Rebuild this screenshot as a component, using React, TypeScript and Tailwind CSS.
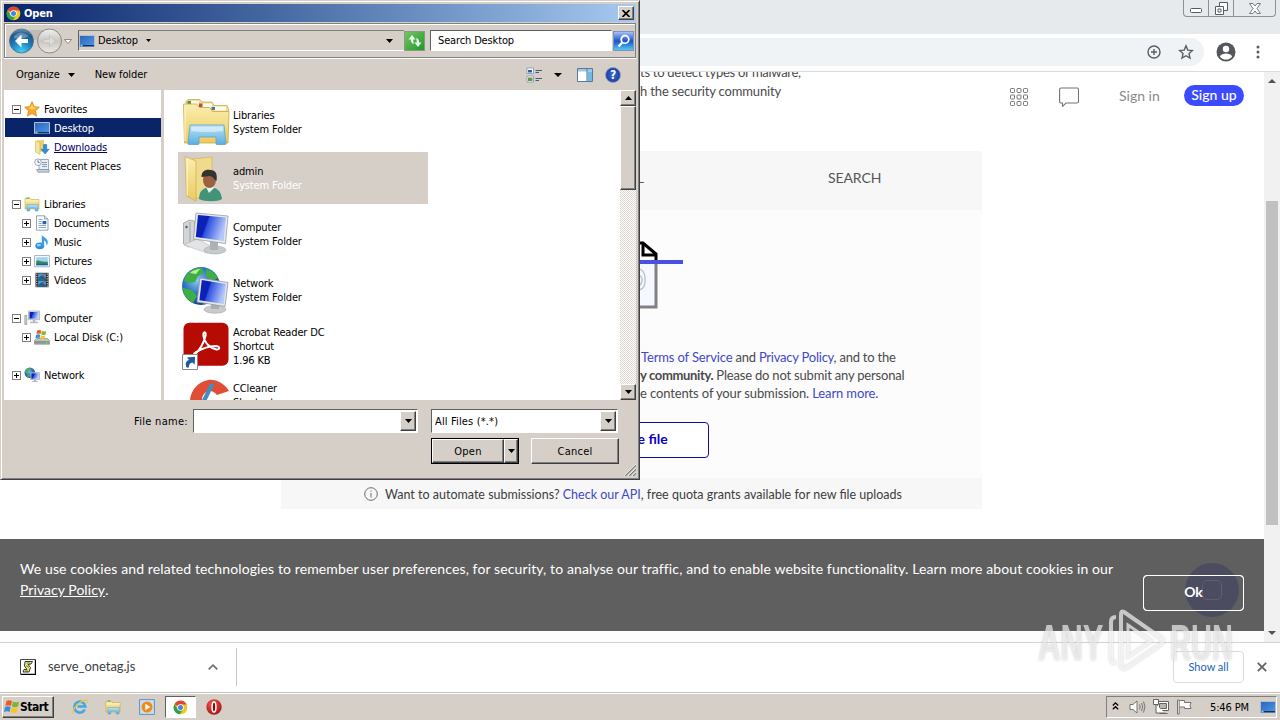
import React from 'react';

type IconProps = { className?: string };

const RAISED =
  'border border-t-white border-l-white border-r-[#404040] border-b-[#404040] shadow-[inset_-1px_-1px_0_#808080] bg-[#d5cfc8]';
const SUNKEN =
  'border border-t-[#606060] border-l-[#606060] border-r-white border-b-white';
const SYSTEM_FONT = "font-['DejaVu_Sans_Condensed','DejaVu_Sans',sans-serif] text-[11px] tracking-[-0.14px]";

/* shared gradients */

function Gradients() {
  return (
    <svg width="0" height="0" className="absolute">
      <defs>
        <linearGradient id="screen" x1="0" y1="0" x2="1" y2="0.3">
          <stop offset="0" stopColor="#0a24c0" />
          <stop offset="0.4" stopColor="#0c20b4" />
          <stop offset="0.45" stopColor="#2c50e0" />
          <stop offset="1" stopColor="#b6c8fa" />
        </linearGradient>
        <linearGradient id="desk" x1="0" y1="0" x2="1" y2="1">
          <stop offset="0" stopColor="#2b62b8" />
          <stop offset="1" stopColor="#4d9be8" />
        </linearGradient>
        <linearGradient id="folder" x1="0" y1="0" x2="0" y2="1">
          <stop offset="0" stopColor="#fbeeb0" />
          <stop offset="1" stopColor="#eccb5e" />
        </linearGradient>
        <linearGradient id="tray" x1="0" y1="0" x2="0" y2="1">
          <stop offset="0" stopColor="#bfe4f8" />
          <stop offset="1" stopColor="#58aede" />
        </linearGradient>
        <radialGradient id="globe" cx="0.4" cy="0.35" r="0.7">
          <stop offset="0" stopColor="#8cc8f0" />
          <stop offset="0.5" stopColor="#2f74c4" />
          <stop offset="1" stopColor="#123f88" />
        </radialGradient>
        <radialGradient id="back" cx="0.5" cy="0.95" r="0.95">
          <stop offset="0" stopColor="#43d3f6" />
          <stop offset="0.5" stopColor="#1c7cb8" />
          <stop offset="0.8" stopColor="#1d5688" />
          <stop offset="1" stopColor="#6f9cc0" />
        </radialGradient>
        <linearGradient id="forward" x1="0" y1="0" x2="0" y2="1">
          <stop offset="0" stopColor="#f0efed" />
          <stop offset="0.5" stopColor="#cac8c4" />
          <stop offset="1" stopColor="#e9e8e6" />
        </linearGradient>
        <radialGradient id="red" cx="0.4" cy="0.3" r="0.8">
          <stop offset="0" stopColor="#ee5a50" />
          <stop offset="1" stopColor="#a30d0d" />
        </radialGradient>
      </defs>
    </svg>
  );
}

/* small icons */

function ChromeIcon({ className = 'size-4' }: IconProps) {
  return (
    <svg viewBox="0 0 16 16" className={className}>
      <circle cx="8" cy="8" r="7.3" fill="#f5c518" />
      <path d="M8 8 1.6 4.4A7.3 7.3 0 0 1 14.5 4.7H8z" fill="#df4632" />
      <path d="M1.6 4.4A7.3 7.3 0 0 0 7.4 15.3L10.8 9.7 8 8 5 9.5z" fill="#2da14c" />
      <circle cx="8" cy="8" r="3.5" fill="#fff" />
      <circle cx="8" cy="8" r="2.7" fill="#4683ea" />
    </svg>
  );
}

function StarIcon() {
  return (
    <svg viewBox="0 0 16 16" className="size-4">
      <path d="M8 .7l2.2 4.9 5.2.6-3.9 3.6 1.1 5.3L8 12.4l-4.6 2.7 1.1-5.3L.6 6.2l5.2-.6z" fill="#f9a72b" stroke="#d97d18" strokeWidth=".7" />
      <path d="M8 2.6l1.5 3.6 3.6.5-5.1 2-3.8-2 2.4-.5z" fill="#fdd45c" />
    </svg>
  );
}

function DesktopIcon() {
  return (
    <svg viewBox="0 0 16 16" className="size-4">
      <path d="M.5 2.5h15v11H.5z" fill="url(#desk)" stroke="#aebfd0" strokeWidth="1" />
      <path d="M1 12h14v1.5H1z" fill="#14316e" />
      <path d="M1.5 11.8h2v1.6h-2z" fill="#8fe0e8" />
    </svg>
  );
}

function DownloadsIcon() {
  return (
    <svg viewBox="0 0 16 16" className="size-4">
      <path d="M3 1.5 10 .8v12H3z" fill="#ead071" />
      <path d="M1.5 1.8 6 3.4v11.8L1.5 13z" fill="#f6e49b" stroke="#c8a840" strokeWidth=".5" />
      <path d="M9.5 5.5h3.2v4.8h2.5L11.1 15 7 10.3h2.5z" fill="#2e8fe0" stroke="#1a66b4" strokeWidth=".5" />
    </svg>
  );
}

function RecentIcon() {
  return (
    <svg viewBox="0 0 16 16" className="size-4">
      <path d="M5 1.5h9.5v10H5z" fill="#e8eef4" stroke="#8a98a8" strokeWidth=".8" />
      <path d="M2.5 11.5H15v2.7H4z" fill="#c5d0da" stroke="#7d8b9a" strokeWidth=".7" />
      <path d="M8 4.5h5M8 6.5h5M8 8.5h5" stroke="#7c93ac" strokeWidth=".9" />
      <circle cx="4" cy="4.2" r="3.3" fill="#f4f8fb" stroke="#8695a5" strokeWidth=".8" />
      <path d="M4 2.2v2.2h1.6" stroke="#456" strokeWidth=".8" fill="none" />
    </svg>
  );
}

function LibraryIcon() {
  return (
    <svg viewBox="0 0 16 16" className="size-4">
      <path d="M1 2.2h5l1 1.3h8v9.5H1z" fill="url(#folder)" stroke="#c9a846" strokeWidth=".6" />
      <path d="M2.5 1.5h3v1.2h-3z" fill="#5cae5c" />
      <path d="M1 5h14" stroke="#fff6cc" strokeWidth=".8" />
      <path d="M3 8.5h11V15h-2.7v-3H5.7v3H3z" fill="url(#tray)" stroke="#4a9ccc" strokeWidth=".5" />
    </svg>
  );
}

function DocumentIcon() {
  return (
    <svg viewBox="0 0 16 16" className="size-4">
      <path d="M2.5.8h8L14 4v11.2H2.5z" fill="#fbfcfe" stroke="#7d8ea4" strokeWidth=".8" />
      <path d="M10.5.8V4H14" fill="#d5deea" stroke="#7d8ea4" strokeWidth=".7" />
      <path d="M4.5 4.5h4M4.5 6.5h3M4.5 8.5h3M4.5 10.5h7.5M4.5 12.5h7.5" stroke="#7f9fc8" strokeWidth=".9" />
      <path d="M8.5 6h3.8v3.2H8.5z" fill="#2f62a8" />
    </svg>
  );
}

function MusicIcon() {
  return (
    <svg viewBox="0 0 16 16" className="size-4">
      <ellipse cx="5.8" cy="11.8" rx="4.5" ry="3.4" fill="#2f8fd8" />
      <path d="M7.8 12V.5c.8 3 5.800 3.400 6 7.200 0 1.600-.4 2.800-1.400 3.900.4-3-.8-4.600-2.300-5.200V12z" fill="#3b9fe6" />
      <ellipse cx="4.8" cy="11.1" rx="2.2" ry="1.3" fill="#8fcdf6" />
    </svg>
  );
}

function PicturesIcon() {
  return (
    <svg viewBox="0 0 16 16" className="size-4">
      <path d="M.6 2.6h14.8v11.2H.6z" fill="#fff" stroke="#8d9bab" strokeWidth=".8" />
      <path d="M2.2 4.2h11.6v8H2.2z" fill="#9fd4f2" />
      <path d="M2.2 8c3-1.6 6 2 11.6.5v3.7H2.2z" fill="#3d8a5c" />
      <path d="M2.2 10.6h11.6v1.6H2.2z" fill="#1d5fa4" />
    </svg>
  );
}

function VideosIcon() {
  return (
    <svg viewBox="0 0 16 16" className="size-4">
      <path d="M1.5.8h13v14.4h-13z" fill="#26262c" />
      <path d="M4.2 1.5h7.6v6H4.2zM4.2 8.5h7.6v6H4.2z" fill="#4aa3d0" />
      <path d="M4.5 5.5 8 3l3.5 3v1.3h-7zM4.5 12.5 8 10l3.5 3v1.3h-7z" fill="#1f5f96" />
      <path d="M9 2h2v2H9zM9 9h2v2H9z" fill="#c85a50" />
      <path d="M2.8 1.5v14M13.2 1.5v14" stroke="#fff" strokeWidth="1" strokeDasharray="1.2 1.2" />
    </svg>
  );
}

function ComputerIcon() {
  return (
    <svg viewBox="0 0 16 16" className="size-4">
      <path d="M.8 5.5h2v9h-2z" fill="#cfd2d4" stroke="#7d8184" strokeWidth=".6" />
      <path d="M4.5 1h11v8.7h-11z" fill="#e2e4e6" stroke="#9298a0" strokeWidth=".6" />
      <path d="M5.5 2h9v6.7h-9z" fill="url(#screen)" />
      <path d="M8.8 9.8h2.6v2H14v1.4H6v-1.4h2.8z" fill="#b6babd" />
    </svg>
  );
}

function DiskIcon() {
  return (
    <svg viewBox="0 0 16 16" className="size-4">
      <path d="M2.5 9.5h11l2 2v3.7H.5v-3.7z" fill="#bfc4c3" stroke="#73797a" strokeWidth=".6" />
      <path d="M1 12h14v2.7H1z" fill="#8b9494" />
      <path d="M11.5 12.6h2.5v1.4h-2.5z" fill="#55e03a" />
      <path d="M3.2 1.6C4.8.6 6.2.8 7.3 1.5L6.5 5C5.300 4.300 4 4.200 2.400 5.100z" fill="#ee5a24" />
      <path d="M8 1.800c1.500.9 3 .9 4.400.1l-.8 3.500c-1.500.8-3 .7-4.400-.1z" fill="#7fba2c" />
      <path d="M2.200 6c1.500-.9 2.900-.8 4.100-.1l-.8 3.300c-1.300-.7-2.600-.6-4.100.1z" fill="#2f8de0" />
      <path d="M7 6.200c1.500.8 2.900.9 4.400.1l-.8 3.200c-1.400.8-2.900.8-4.400 0z" fill="#fbc41c" />
    </svg>
  );
}

function NetworkIcon() {
  return (
    <svg viewBox="0 0 16 16" className="size-4">
      <circle cx="5.8" cy="5.800" r="5.300" fill="url(#globe)" />
      <path d="M2 2.500c2-1.800 4-1.500 5-.8L5 4.500 3 5.500 1 5zM3.500 7l2.500 1-1 2.800-1.800-.6z" fill="#4cb34a" />
      <path d="M6.500 5.500h9v7h-9z" fill="#e0e3e6" stroke="#8b9199" strokeWidth=".5" />
      <path d="M7.300 6.300h7.400v5.400H7.300z" fill="url(#screen)" />
      <path d="M10 12.600h2v1.300h1.800V15H8.200v-1.100H10z" fill="#b3b8bb" />
    </svg>
  );
}

/* 48px icons */

function LibrariesLarge() {
  return (
    <svg viewBox="0 0 48 48" className="size-12">
      <path d="M4 8V3.500L6 1.500h12l2 2.500h10l2 3.500h13l1.500 3V15H4z" fill="#f4dd86" stroke="#c4a248" strokeWidth=".7" />
      <path d="M8 3h9v4H8zM20 5.500h10v4H20zM32 8.500h12v4H32z" fill="#fcfcf6" />
      <path d="M5.500 3h3.500v3H5.500z" fill="#4a9850" />
      <path d="M17 5.500h3.500v3.500H17z" fill="#d04438" />
      <path d="M29.500 9h3.500v3h-3.500z" fill="#4278b0" />
      <path d="M1.500 6h13l3 3.500h10l3 4H47L46 45H2.500z" fill="url(#folder)" stroke="#caa84a" strokeWidth=".8" />
      <path d="M3 9v34" stroke="#fff8d4" strokeWidth="1" />
      <path d="M8 27h34l2 18.500q0 1-1 1h-8q-1 0-1-1V39H17v6.500q0 1-1 1H7q-1 0-1-1z" fill="url(#tray)" stroke="#56a4cf" strokeWidth=".8" />
      <path d="M9.500 29h31l.6 4q-16 2-32 0z" fill="#d9effb" opacity=".8" />
    </svg>
  );
}

function UserFolder() {
  return (
    <svg viewBox="0 0 48 48" className="size-12">
      <path d="M10 5 30 3v41H10z" fill="#f0da8c" stroke="#d0b050" strokeWidth=".6" />
      <path d="M3 2.500 14 7v40L4.500 42z" fill="url(#folder)" stroke="#cbaa4c" strokeWidth=".7" />
      <path d="M5.200 5v36.500" stroke="#fff7cf" strokeWidth="1" />
      <path d="M17 45c0-8 4-11 10-12 7 0 12 3 13 12-4 3-18 3-23 0z" fill="#429478" />
      <path d="M24 33l3 6 6-6z" fill="#eaf4f0" />
      <ellipse cx="27.500" cy="26" rx="6.500" ry="8" fill="#9a6242" />
      <path d="M19.500 23c0-6 4-8 9-7 6 0 7 5 6 11-3-2-4-5-7-5-2 0-5 1-8 1z" fill="#35332f" />
    </svg>
  );
}

function ComputerLarge() {
  return (
    <svg viewBox="0 0 48 48" className="size-12">
      <path d="M1.500 13l6-3 5 1v23l-6 3-5-3z" fill="#d2d4d6" stroke="#94989c" strokeWidth=".7" />
      <path d="M8 12v23" stroke="#8b8f94" strokeWidth=".7" />
      <circle cx="4.500" cy="17" r="1.200" fill="#555b62" />
      <path d="M2 35l13-6 18 9-8 5z" fill="#e2e4e6" stroke="#abafb3" strokeWidth=".5" />
      <ellipse cx="33" cy="40" rx="11" ry="4" fill="#c7cacd" stroke="#9b9fa3" strokeWidth=".5" />
      <path d="M28 30h8v10h-8z" fill="#adb1b5" />
      <path d="M14 3 46 6l-2.500 27.500L11.500 29z" fill="#e7e9ec" stroke="#989da3" strokeWidth=".8" />
      <path d="M16 5 44 7.600 41.700 31 13.800 27z" fill="url(#screen)" />
    </svg>
  );
}

function NetworkLarge() {
  return (
    <svg viewBox="0 0 48 48" className="size-12">
      <circle cx="19" cy="20" r="19" fill="url(#globe)" />
      <path d="M4 9C9 3 15 1 20 2l2 5-6 3-3 6-6 1-5-2zM24 3c6 1 10 5 12 9l-6 3-6-5zM1 22l9 2 5 6-4 7C4 33 1 28 1 22z" fill="#3fae45" />
      <path d="M8 7c3-3 8-4 10-4l-4 5z" fill="#b8ee96" />
      <ellipse cx="33" cy="43.500" rx="11" ry="3.800" fill="#c9cccf" stroke="#9a9ea2" strokeWidth=".5" />
      <path d="M29 36h8v7h-8z" fill="#aaaeb2" />
      <path d="M18 12 46 16.500l-3 24L15 36z" fill="#e5e7ea" stroke="#92979d" strokeWidth=".8" />
      <path d="M19.800 14 44 18l-2.400 20-24.200-3.800z" fill="url(#screen)" />
    </svg>
  );
}

function AcrobatIcon() {
  return (
    <svg viewBox="0 0 48 48" className="size-12">
      <rect x="1.500" y=".8" width="45" height="43" rx="6" fill="#b50b02" />
      <path
        d="M12.500 33c5-5 9-11 11-19 1.200-5-3-5-2 0 .8 7 8 13 13 13.500 4 .2 3.500-3.400-1-3.400-8 .2-13 2.300-19.500 6-3 2-2.500 4-1.500 2.900z"
        fill="none"
        stroke="#fff"
        strokeWidth="2"
        strokeLinejoin="round"
      />
      <path d="M.5 32.500h15v15H.5z" fill="#fff" stroke="#8b8b8b" />
      <path d="M4.500 45.500c-1.500-4-.5-6.800 2.500-7.500L5 35.500l8-.8-.3 8-2.200-2.200C8 40.800 6.800 42.500 7 45.500z" fill="#1e5a9c" />
    </svg>
  );
}

function CCleanerIcon() {
  return (
    <svg viewBox="0 0 48 48" className="size-12">
      <path d="M47 13C42 5 34 1 26 2 16 4 9 12 8 22c0 14 10 24 22 24 6 0 11-2 15-6l-8-9c-8 5-17 0-17-9 0-8 9-13 15-5z" fill="#e14e36" />
      <path d="M28 6c2-1 5-1 4 1L19 34l-5 8-3-2z" fill="#3f8fc6" />
    </svg>
  );
}

/* file dialog */

type TreeNode = { label: string; level: 0 | 1; icon: React.ReactNode; expand?: '+' | '-'; state?: 'selected' | 'hover' };

const tree: (TreeNode | null)[] = [
  { label: 'Favorites', level: 0, icon: <StarIcon />, expand: '-' },
  { label: 'Desktop', level: 1, icon: <DesktopIcon />, state: 'selected' },
  { label: 'Downloads', level: 1, icon: <DownloadsIcon />, state: 'hover' },
  { label: 'Recent Places', level: 1, icon: <RecentIcon /> },
  null,
  { label: 'Libraries', level: 0, icon: <LibraryIcon />, expand: '-' },
  { label: 'Documents', level: 1, icon: <DocumentIcon />, expand: '+' },
  { label: 'Music', level: 1, icon: <MusicIcon />, expand: '+' },
  { label: 'Pictures', level: 1, icon: <PicturesIcon />, expand: '+' },
  { label: 'Videos', level: 1, icon: <VideosIcon />, expand: '+' },
  null,
  { label: 'Computer', level: 0, icon: <ComputerIcon />, expand: '-' },
  { label: 'Local Disk (C:)', level: 1, icon: <DiskIcon />, expand: '+' },
  null,
  { label: 'Network', level: 0, icon: <NetworkIcon />, expand: '+' },
];

const files = [
  { lines: ['Libraries', 'System Folder'], icon: <LibrariesLarge /> },
  { lines: ['admin', 'System Folder'], icon: <UserFolder />, selected: true },
  { lines: ['Computer', 'System Folder'], icon: <ComputerLarge /> },
  { lines: ['Network', 'System Folder'], icon: <NetworkLarge /> },
  { lines: ['Acrobat Reader DC', 'Shortcut', '1.96 KB'], icon: <AcrobatIcon /> },
  { lines: ['CCleaner', 'Shortcut', '844 B'], icon: <CCleanerIcon /> },
];

function Expander({ sign }: { sign?: '+' | '-' }) {
  if (!sign) return <span className="size-[9px]" />;
  return (
    <svg viewBox="0 0 9 9" className="mt-px size-[9px]" shapeRendering="crispEdges">
      <path d="M.5.5h8v8h-8z" fill="#fff" stroke="#808080" />
      <path d={sign === '+' ? 'M2 4.5h5M4.500 2v5' : 'M2 4.5h5'} stroke="#000" />
    </svg>
  );
}

function Caret({ className = 'h-1 w-[7px]' }: IconProps) {
  return (
    <svg viewBox="0 0 7 4" className={`shrink-0 ${className}`} preserveAspectRatio="none">
      <path d="M0 0h7L3.500 4z" fill="#000" />
    </svg>
  );
}

function TreeRow({ node }: { node: TreeNode | null }) {
  if (!node) return <div className="h-[19px]" />;
  return (
    <div
      className={`flex h-[19px] items-center ${node.level ? 'pl-[17px]' : 'pl-[7px]'} ${
        node.state === 'selected' ? 'bg-[#0a246a] text-white' : ''
      }`}
    >
      <Expander sign={node.expand} />
      <span className="mr-1 ml-[3px]">{node.icon}</span>
      <span className={node.state === 'hover' ? 'pt-[2px] text-[#00006a] underline' : 'pt-[2px]'}>{node.label}</span>
    </div>
  );
}

function AddressBar() {
  return (
    <div className="flex h-[35px] items-center border border-[#808080] pl-[4px] shadow-[0_1px_0_#fff,inset_1px_1px_0_#fff]">
      <svg viewBox="0 0 64 26" className="h-[26px] w-16">
        <path d="M13 2h28v10H13z" fill="#c0bbb4" />
        <circle cx="12.500" cy="13" r="12" fill="url(#back)" stroke="#4f6f88" strokeWidth=".8" />
        <path d="M5 8q7-7 15 0-7 4-15 2z" fill="#fff" opacity=".3" />
        <path d="M12.500 6.500 6 13l6.500 6.500V15H19v-4h-6.500z" fill="#fff" />
        <circle cx="40.500" cy="13" r="12" fill="url(#forward)" stroke="#8b8987" strokeWidth="1" />
        <path d="M40.500 7.500 46.500 13l-6 5.500v-3.800h-6v-3.400h6z" fill="#dedcd9" stroke="#bdbab6" strokeWidth=".7" />
        <path d="M55.500 11.500h7L59 15.500z" fill="#fff" stroke="#77746f" strokeWidth=".8" />
      </svg>
      <div className="ml-[5px] flex h-[21px] w-[326px] items-center border-t border-b border-l border-t-[#808080] border-b-white border-l-[#606060]">
        <DesktopIcon />
        <span className="ml-[3px]">Desktop</span>
        <Caret className="ml-2 h-[3px] w-[5px]" />
        <Caret className="mr-[11px] ml-auto h-1 w-[7px]" />
      </div>
      <div className="flex h-5 w-[21px] items-center justify-center border border-[#8a9a80] bg-linear-to-br from-[#6fc463] to-[#1b9a28]">
        <svg viewBox="0 0 16 14" className="h-3.5 w-4">
          <path d="M5 1 1.500 5.500h2.300c0 2.800 1 4 3.400 4.500-1-1.200-1-2.500-.8-4.500h2.200zM11 13l3.500-4.500h-2.300c0-2.800-1-4-3.400-4.500 1 1.200 1 2.500.8 4.500H7.400z" fill="#eafbe6" />
        </svg>
      </div>
      <div className={`ml-[5px] flex h-[21px] w-[182px] items-center bg-white pt-px pl-[7px] ${SUNKEN}`}>Search Desktop</div>
      <div className="ml-px flex h-5 w-[21px] items-center justify-center border border-[#7f93b8] bg-linear-to-b from-[#a9c0f2] via-[#1c50d0] to-[#58c8f4]">
        <svg viewBox="0 0 16 16" className="size-4" fill="none" stroke="#fff">
          <circle cx="9" cy="6.500" r="3.800" strokeWidth="1.800" />
          <path d="M6.200 9.500 2.500 13.500" strokeWidth="2.400" />
        </svg>
      </div>
    </div>
  );
}

function DialogToolbar() {
  return (
    <div className="flex h-8 items-center pl-3">
      <span className="tracking-[-0.08px]">Organize</span>
      <Caret className="ml-2 h-1 w-[7px]" />
      <span className="ml-5 tracking-[-0.1px]">New folder</span>
      <div className="ml-auto flex items-center pr-[15px]">
        <svg viewBox="0 0 16 16" className="size-4">
          <path d="M1 1h6.500v5.500H1zM1 9h6.500v6H1z" fill="#fff" stroke="#8393a8" strokeWidth=".8" />
          <path d="M2 3h4v2.500H2z" fill="#2c5cc0" />
          <path d="M2 10.500h4.500V14H2z" fill="#5c9a3c" />
          <path d="M9.500 3.500H16M9.500 5.500H13M9.500 11.500H16M9.500 13.500H13" stroke="#445a78" strokeWidth="1" />
        </svg>
        <Caret className="ml-3 h-1 w-2" />
        <svg viewBox="0 0 16 14" className="ml-[15px] h-3.5 w-4">
          <path d="M.5.5h15v13H.5z" fill="#fff" stroke="#57799c" />
          <path d="M1 1h14v2.500H1z" fill="#9fc4e4" />
          <path d="M10.500 3.500H15V13h-4.500z" fill="#6dbbe2" />
          <path d="M10 1v12" stroke="#57799c" />
        </svg>
        <div className="ml-3 flex size-4 items-center justify-center rounded-full border border-[#8a98bd] bg-radial from-[#3c6cd8] to-[#102f8a] text-[12px] font-bold text-white">
          ?
        </div>
      </div>
    </div>
  );
}

function ComboArrow() {
  return (
    <div className={`flex h-full w-4 items-center justify-center ${RAISED}`}>
      <Caret />
    </div>
  );
}

function OpenDialog() {
  return (
    <div
      className={`absolute top-0 left-0 h-[480px] w-[640px] overflow-hidden border border-t-[#d5cfc8] border-r-[#404040] border-b-[#404040] border-l-[#d5cfc8] bg-[#d5cfc8] leading-[14px] text-black shadow-[inset_1px_1px_0_#fff,inset_-1px_-1px_0_#808080] ${SYSTEM_FONT}`}
    >
      <div className="flex h-full flex-col p-[3px]">
        <div className="flex h-[18px] shrink-0 items-center bg-linear-to-r from-[#0a246a] to-[#a6caf0] pl-[2px]">
          <ChromeIcon className="size-[15px]" />
          <span className="ml-[3px] pt-[2px] font-bold text-white">Open</span>
          <div className={`mr-[2px] ml-auto flex h-3.5 w-4 items-center justify-center ${RAISED}`}>
            <svg viewBox="0 0 8 7" className="h-[7px] w-2">
              <path d="M.5 0 7.500 7M7.500 0 .5 7" stroke="#000" strokeWidth="1.600" />
            </svg>
          </div>
        </div>
        <div className="mt-px">
          <AddressBar />
        </div>
        <div className="mt-px shrink-0">
          <DialogToolbar />
        </div>

        <div className="-mt-px flex h-[310px] shrink-0">
          <div className="w-[157px] shrink-0 bg-white pt-[9px] pl-px">
            {tree.map((node, i) => (
              <TreeRow key={i} node={node} />
            ))}
          </div>
          <div className="w-[3px] shrink-0 bg-[#d5cfc8]" />
          <div className="flex flex-1 flex-col gap-1 overflow-hidden bg-white pt-[6px] pl-[14px]">
            {files.map((f) => (
              <div key={f.lines[0]} className={`flex h-[52px] w-[250px] shrink-0 items-center pl-1 ${f.selected ? 'bg-[#d5cfc8]' : ''}`}>
                {f.icon}
                <div className="ml-[3px] pt-[2px]">
                  {f.lines.map((line, i) => (
                    <div key={line} className={f.selected && i > 0 ? 'text-white' : ''}>
                      {line}
                    </div>
                  ))}
                </div>
              </div>
            ))}
          </div>
          <div className="flex w-4 shrink-0 flex-col bg-[repeating-conic-gradient(#ffffff_0_25%,#dad5ce_0_50%)] bg-size-[2px_2px]">
            <div className={`flex h-4 items-center justify-center ${RAISED}`}>
              <Caret className="h-1 w-[7px] rotate-180" />
            </div>
            <div className={`h-[84px] ${RAISED}`} />
            <div className={`mt-auto flex h-4 items-center justify-center ${RAISED}`}>
              <Caret />
            </div>
          </div>
        </div>

        <div className="flex items-center pt-[9px]">
          <span className="w-[184px] pt-px text-right tracking-[0.3px]">File name:</span>
          <div className={`ml-[5px] flex h-6 w-[225px] justify-end bg-white p-px ${SUNKEN}`}>
            <ComboArrow />
          </div>
          <div className={`ml-[13px] flex h-6 w-[187px] items-center justify-between bg-white p-px ${SUNKEN}`}>
            <span className="pt-px pl-[2px] tracking-[0.15px]">All Files (*.*)</span>
            <ComboArrow />
          </div>
        </div>
        <div className="flex pt-[5px] pl-[427px]">
          <div className="flex h-[26px] w-[88px] border border-black">
            <div className={`flex flex-1 items-center justify-center pt-px tracking-[0.25px] ${RAISED}`}>Open</div>
            <div className={`flex w-[14px] items-center justify-center ${RAISED}`}>
              <Caret />
            </div>
          </div>
          <div className={`ml-3 flex h-[26px] w-[88px] items-center justify-center pt-px tracking-[0.25px] ${RAISED}`}>Cancel</div>
          <svg viewBox="0 0 12 12" className="mt-[26px] ml-[5px] size-3 shrink-0">
            <path d="M1 12 12 1M5 12l7-7M9 12l3-3" stroke="#808080" strokeWidth="1.500" />
            <path d="M0 12 12 0M4 12l8-8M8 12l4-4" stroke="#fff" strokeWidth=".7" />
          </svg>
        </div>
      </div>
    </div>
  );
}

/* browser */

function WindowChrome() {
  return (
    <div className="flex h-[34px] shrink-0 justify-end bg-[#e7eaed] pr-1">
      <div className="flex h-[17px] w-[93px] rounded-b-[4px] border border-t-0 border-[#8d9196]">
        <div className="flex w-[25px] items-center justify-center border-r border-[#8d9196]">
          <svg viewBox="0 0 12 5" className="mt-1 h-[5px] w-3">
            <rect x=".5" y=".5" width="11" height="4" rx="1" fill="#fff" stroke="#555b62" />
          </svg>
        </div>
        <div className="flex w-[25px] items-center justify-center border-r border-[#8d9196]">
          <svg viewBox="0 0 13 13" className="size-[13px]" fill="#fff" stroke="#555b62">
            <path d="M4.500.5h8v8h-8z" />
            <path d="M.5 4.500h8v8h-8z" />
            <path d="M3 7h3v3H3z" />
          </svg>
        </div>
        <div className="flex flex-1 items-center justify-center">
          <svg viewBox="0 0 12 11" className="h-[11px] w-3">
            <path d="M.5.5H4L6 3l2-2.500h3.500L8 5.500l3.500 5H8L6 8l-2 2.500H.5l3.500-5z" fill="#fff" stroke="#6a7077" strokeWidth=".9" />
          </svg>
        </div>
      </div>
    </div>
  );
}

function BrowserToolbar() {
  return (
    <div className="flex h-[38px] shrink-0 items-center border-b border-[#dadcdf] bg-white pb-px text-[#5a5d61]">
      <div className="flex h-7 w-[1204px] items-center justify-end gap-[17px] rounded-r-full bg-[#f0f3f6] pr-[10px]">
        <svg viewBox="0 0 14 14" className="size-3.5" fill="none" stroke="currentColor" strokeWidth="1.400">
          <circle cx="7" cy="7" r="6" />
          <path d="M7 4v6M4 7h6" />
        </svg>
        <svg viewBox="0 0 16 16" className="size-4" fill="none" stroke="currentColor" strokeWidth="1.400">
          <path d="M8 1.800l1.800 4.300 4.700.4-3.500 3.100 1 4.500L8 11.700l-4 2.400 1-4.500-3.500-3.100 4.700-.4z" />
        </svg>
      </div>
      <svg viewBox="0 0 20 20" className="ml-3 size-5">
        <circle cx="10" cy="10" r="9.500" fill="#54575b" />
        <circle cx="10" cy="7" r="3.200" fill="#fff" />
        <path d="M3.800 14.500C5 12.500 7.500 11.600 10 11.600s5 .9 6.200 2.900A7.500 7.500 0 0 1 10 17.600a7.500 7.500 0 0 1-6.200-3.100z" fill="#fff" />
      </svg>
      <svg viewBox="0 0 4 14" className="ml-[20px] h-3.5 w-1" fill="currentColor">
        <circle cx="2" cy="2" r="1.500" />
        <circle cx="2" cy="7" r="1.500" />
        <circle cx="2" cy="12" r="1.500" />
      </svg>
    </div>
  );
}

function SiteHeader() {
  return (
    <div className="flex h-[79px] items-start overflow-hidden pl-[640px]">
      <div className="-mt-[9px] w-[368px] text-[13px] leading-[19px] whitespace-nowrap text-[#4a4a4a]">
        <div className="tracking-[-0.28px]">ts to detect types of malware,</div>
        <div className="tracking-[-0.15px]">h the security community</div>
      </div>
      <div className="flex items-center pt-[13px]">
        <svg viewBox="0 0 20 20" className="mt-px ml-[1px] size-5" fill="none" stroke="#757575">
          {[1.500, 8, 14.500].map((y) =>
            [1.500, 8, 14.500].map((x) => <rect key={`${x}-${y}`} x={x} y={y} width="4" height="4" rx=".8" />),
          )}
        </svg>
        <svg viewBox="0 0 20 20" className="mt-px ml-[30px] size-5" fill="none" stroke="#757575" strokeWidth="1.100">
          <path d="M2 1h16q1.500 0 1.500 1.500v12q0 1.500-1.500 1.500H7l-3.500 3.300V16H2Q.6 16 .6 14.500v-12Q.6 1 2 1z" />
        </svg>
        <span className="ml-[40px] w-[42px] pb-[2px] text-[14px] leading-5 text-[#8b8b8b]">Sign in</span>
        <span className="mb-[2px] ml-[23px] h-[21px] w-[60px] rounded-full bg-[#3b4bff] text-center text-[14px] leading-[20px] font-medium text-white">
          Sign up
        </span>
      </div>
    </div>
  );
}

function UploadCard() {
  return (
    <div className="ml-[281px] w-[701px]">
      <div className="flex h-[59px] items-center bg-[#f7f7f7] pb-[6px] text-[14px] text-[#555]">
        <div className="w-[233px] text-center">FILE</div>
        <div className="w-[240px] pl-[102px]">
          <span className="inline-block w-[28px] text-right">URL</span>
        </div>
        <div className="pl-[74px] tracking-[-0.1px]">SEARCH</div>
      </div>
      <div className="flex h-[268px] flex-col bg-[#fcfcfc] pt-[30px]">
        <svg viewBox="0 0 108 70" className="ml-[296px] h-[70px] w-[108px] shrink-0" fill="none">
          <path d="M28 22h51v45H28z" fill="#f5f8ff" stroke="#808086" strokeWidth="3" />
          <path d="M28 20V3h38l13 11v6" stroke="#000" strokeWidth="3" />
          <path d="M66 3v12h13" stroke="#000" strokeWidth="3" />
          <path d="M56 30q11-4 12 8t-8 12M60 35q6 1 5 6t-5 5" stroke="#c0c4ce" strokeWidth="1.500" />
          <path d="M2 22h104" stroke="#4b50e4" strokeWidth="4" />
        </svg>
        <div className="mt-[38px] pl-[359px] text-[13px] leading-[18px] tracking-[-0.14px] whitespace-nowrap text-[#4a4a4a]">
          <div className="pl-[1px] tracking-[-0.23px]">
            <span className="tracking-[-0.14px] text-[#4048c8]">Terms of Service</span> and <span className="text-[#4048c8]">Privacy Policy</span>, and to the
          </div>
          <div className="tracking-[-0.19px]">
            <span className="font-bold tracking-[-0.35px]">y community.</span> Please do not submit any personal
          </div>
          <div className="tracking-[-0.12px]">
            e contents of your submission. <span className="text-[#4048c8]">Learn more.</span>
          </div>
        </div>
        <div className="mt-5 ml-[272px] flex h-9 w-[156px] items-center justify-center rounded-[4px] border border-[#0f0aa8] bg-white pb-[3px] pl-1 text-[14px] font-bold text-[#0b00c4]">
          Choose file
        </div>
      </div>
      <div className="flex h-[31px] items-center bg-[#f7f7f7] pl-[83px] text-[12.5px] whitespace-nowrap text-[#3d3d3d]">
        <svg viewBox="0 0 14 14" className="mr-[7px] size-3.5" fill="none" stroke="#6b6b6b">
          <circle cx="7" cy="7" r="6.300" />
          <path d="M7 6v4.500M7 3.500v1.200" />
        </svg>
        <span className="pt-[4px]">
          Want to automate submissions? <span className="text-[#4048c8]">Check our API</span>, free quota grants available for new file uploads
        </span>
      </div>
    </div>
  );
}

function CookieBanner() {
  return (
    <div className="mt-[30px] flex h-[92px] bg-[#5f5f5f] pl-5 text-[14px] text-white">
      <div className="w-[1123px] pt-[19px] leading-[21px] tracking-[0.115px]">
        <div className="whitespace-nowrap">
          We use cookies and related technologies to remember user preferences, for security, to analyse our traffic, and to enable website
          functionality. Learn more about cookies in our
        </div>
        <span className="tracking-[0.05px] underline">Privacy Policy</span>.
      </div>
      <div className="relative mt-9 flex h-9 w-[101px] items-center justify-center rounded-[4px] border border-white font-bold">
        <div className="absolute -top-[13px] left-[41px] flex size-[54px] items-center justify-center rounded-full bg-[#4a4a62]/90">
          <div className="size-5 rounded-[5px] border border-[#5e5e74]" />
        </div>
        <div className="absolute -inset-px rounded-[4px] border border-white" />
        <span className="relative pb-[3px]">Ok</span>
      </div>
    </div>
  );
}

function PageScrollbar() {
  return (
    <div className="flex w-4 flex-col items-center bg-[#f1f1f1]">
      <svg viewBox="0 0 8 4" className="mt-[7px] h-1 w-2">
        <path d="M0 4h8L4 0z" fill="#505050" />
      </svg>
      <div className="mt-[118px] h-[324px] w-3 bg-[#c1c1c1]" />
      <svg viewBox="0 0 8 4" className="mt-auto mb-[7px] h-1 w-2">
        <path d="M0 0h8L4 4z" fill="#505050" />
      </svg>
    </div>
  );
}

function DownloadBar() {
  return (
    <div className="flex h-[50px] shrink-0 items-center border-t border-[#d3d3d3] bg-white pb-px pl-5">
      <svg viewBox="0 0 16 16" className="size-4">
        <path d="M.5.5h15v15H.5z" fill="#fff" stroke="#445" />
        <path d="M15.500 1v14.500H1" stroke="#000" strokeWidth="1.400" fill="none" />
        <path d="M5 2.500h7.500L11 5l-3 .5 2.500 3L9 13H3l1-2.500h3L4.500 7z" fill="#f2ee7a" stroke="#222" strokeWidth=".9" />
        <path d="M6.500 4H10M6 6.500l3 2M5 12h3" stroke="#222" strokeWidth=".6" />
      </svg>
      <span className="ml-3 w-[88px] text-[13px] tracking-[-0.03px] text-[#3c4043]">serve_onetag.js</span>
      <svg viewBox="0 0 10 6" className="ml-[72px] h-1.5 w-2.5" fill="none" stroke="#757575" strokeWidth="1.800">
        <path d="M.7 5.400 5 1.200l4.300 4.200" />
      </svg>
      <div className="ml-[18px] h-[38px] w-px bg-[#c8c8c8]" />
      <div className="ml-auto flex h-8 w-[71px] items-center justify-center rounded-[4px] border border-[#dadce0] text-[11px] text-[#1a62b8]">Show all</div>
      <svg viewBox="0 0 10 10" className="mr-[13px] ml-[13px] size-2.5" stroke="#5f6368" strokeWidth="1.800">
        <path d="M.8.8l8.400 8.400M9.200.8.800 9.200" />
      </svg>
    </div>
  );
}

function Taskbar() {
  return (
    <div className={`flex h-[28px] shrink-0 items-center border-t border-[#c6c1b9] bg-[#d5cfc8] pt-px pl-[2px] shadow-[inset_0_1px_0_#fff] ${SYSTEM_FONT}`}>
      <div className={`flex h-[22px] w-[52px] items-center pl-[1px] text-[12px] font-bold tracking-[-0.5px] text-black ${RAISED}`}>
        <svg viewBox="0 0 16 16" className="size-4 shrink-0">
          <path d="M2.500 2C4.500.7 6 1.100 8 2.100L6.900 7C5.200 6 3.500 6 1.300 7z" fill="#ea5a28" />
          <path d="M9 2.500c1.800 1 4 1.100 6.200.2L14 7.600c-2.200 1-4.300.7-6.200-.2z" fill="#7db72f" />
          <path d="M1 8c2.200-1.100 4-.9 5.600 0l-1.100 5C3.900 12 2.200 12-.1 13z" fill="#3a8be0" />
          <path d="M7.600 8.400c1.900.9 3.900 1 6.200.1l-1.200 4.900c-2.200.9-4.200.8-6.100-.1z" fill="#fac420" />
        </svg>
        Start
      </div>
      <svg viewBox="0 0 16 16" className="ml-[18px] size-4">
        <path d="M12.800 10.500A5.500 5.500 0 1 1 13.300 7.500H5.500" fill="none" stroke="#3fa9e8" strokeWidth="2.600" />
        <path d="M1.500 14.500C-1 11 9 .5 14.500 1.200c1 .3.800 2-.2 3.600" fill="none" stroke="#f0c53c" strokeWidth="1.200" />
      </svg>
      <span className="ml-[17px]">
        <LibraryIcon />
      </span>
      <svg viewBox="0 0 16 16" className="ml-[18px] size-4">
        <path d="M.6.6h14.800v14.800H.6z" fill="#c9def0" stroke="#5a94c8" />
        <circle cx="8" cy="8" r="5.500" fill="#f08a1c" />
        <path d="M6.300 4.800 11.300 8l-5 3.200z" fill="#fff" />
      </svg>
      <div className={`ml-[10px] flex h-[22px] w-[31px] items-center justify-center bg-white ${SUNKEN}`}>
        <ChromeIcon className="size-[15px]" />
      </div>
      <svg viewBox="0 0 16 16" className="ml-[10px] size-4">
        <circle cx="8" cy="8" r="7.700" fill="url(#red)" />
        <ellipse cx="8" cy="8" rx="1.900" ry="5" fill="#8d0a0a" stroke="#fff" strokeWidth="1.500" />
      </svg>

      <div className="mr-[3px] ml-auto flex h-[22px] w-[171px] items-center border border-t-[#808080] border-r-white border-b-white border-l-[#808080] pl-[5px] text-black">
        <svg viewBox="0 0 7 8" className="mb-[3px] h-2 w-[7px]" fill="none" stroke="#000" strokeWidth="1.300">
          <path d="M.8 3.500 3.500.9l2.700 2.600M.8 7.300l2.700-2.600 2.700 2.600" />
        </svg>
        <svg viewBox="0 0 17 16" className="ml-[10px] h-4 w-[17px]" fill="none" stroke="#77746f" strokeWidth="1">
          <path d="M1 5.500h3L8 2v12l-4-3.500H1z" fill="#fff" />
          <path d="M10.500 5.500q1.500 2.500 0 5M12.500 4q2.500 4 0 8M14.500 2.500q3 5.500 0 11" />
        </svg>
        <svg viewBox="0 0 16 16" className="ml-[7px] size-4" fill="#fff" stroke="#66635f" strokeWidth="1">
          <path d="M4.500 2.500h11v9h-11z" />
          <path d="M6.500 4.500h7v5h-7z" fill="#b9b5af" />
          <path d="M.5.5h5v5h-5zM3 5.500V14h9M6.500 14.500h8" />
        </svg>
        <svg viewBox="0 0 16 16" className="ml-[7px] size-4" fill="#fff" stroke="#77746f" strokeWidth="1">
          <path d="M2.500 1.500h6v2h6.500q-2 3 0 6H8.500v-1.500h-5" />
          <path d="M1.500 1h1.700v14H1.500z" />
        </svg>
        <span className="ml-[18px] w-[41px] pt-[2px] whitespace-nowrap">5:46 PM</span>
        <span className="ml-[9px]">
          <DesktopIcon />
        </span>
      </div>
    </div>
  );
}

function Watermark() {
  return (
    <div className="absolute top-[609px] left-[1038px] flex h-16 w-[196px] items-center font-['Liberation_Sans',sans-serif] text-[50px] leading-[64px] font-bold text-white/60 [text-shadow:0_0_3px_rgba(120,120,120,0.45)]">
      <span className="w-[66px] origin-left scale-x-[0.62] pt-1">ANY</span>
      <svg viewBox="0 0 60 64" className="ml-[3px] h-16 w-[60px] shrink-0 drop-shadow-[0_0_1px_rgba(110,110,110,0.5)]" fill="none" stroke="#fff" strokeOpacity=".65">
        <path d="M17 3 53 28q5 4 0 8L19 59q-4 2-5-2V6q0-5 3-3z" strokeWidth="4" />
        <path d="M21 16 44 32 21 48z" strokeWidth="3" />
        <path d="M9 8Q4 8 4 13v36q0 5 5 5" strokeWidth="4" />
      </svg>
      <span className="ml-[3px] w-[64px] origin-left scale-x-[0.58] pt-1">RUN</span>
    </div>
  );
}

export default function App() {
  return (
    <div className="relative flex h-[720px] w-[1280px] flex-col overflow-hidden bg-white font-['Lato',sans-serif]">
      <Gradients />
      <WindowChrome />
      <BrowserToolbar />
      <div className="flex h-[570px] shrink-0">
        <div className="w-[1264px] overflow-hidden bg-white">
          <SiteHeader />
          <UploadCard />
          <CookieBanner />
          <div className="h-[11px] bg-[#fcfcfc]" />
        </div>
        <PageScrollbar />
      </div>
      <DownloadBar />
      <Taskbar />
      <OpenDialog />
      <Watermark />
    </div>
  );
}
